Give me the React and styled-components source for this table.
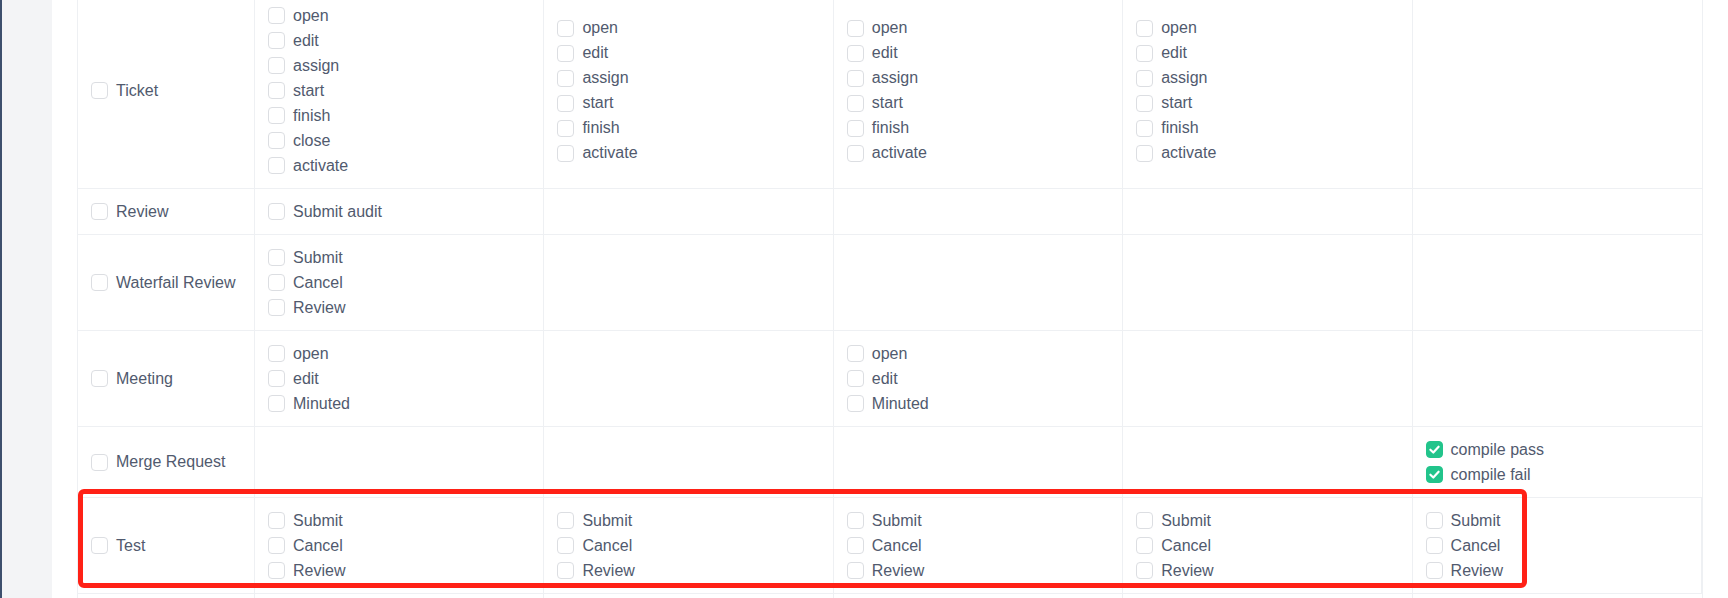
import React from 'react'
import styled, { createGlobalStyle } from 'styled-components'

const GlobalStyle = createGlobalStyle`
    html, body {
        margin: 0;
        padding: 0;
        background: #ffffff;
    }
    body {
        font-family: "Liberation Sans", Arial, sans-serif;
    }
`;

const Page = styled.div`
    display: flex;
    height: 598px;
    overflow: hidden;
`;

const Rail = styled.div`
    width: 2px;
    flex-shrink: 0;
    background-color: #3d4f6d;
`;

const Gutter = styled.div`
    width: 50px;
    flex-shrink: 0;
    background-color: #f3f4f6;
`;

const Main = styled.div`
    flex: 1;
    padding-left: 25px;
    background-color: #ffffff;
`;

const Table = styled.div`
    width: 1626px;
    margin-top: -7px;
    border-left: 1px solid #eef0f3;
    border-right: 1px solid #eef0f3;
    box-sizing: border-box;
`;

const Row = styled.div`
    position: relative;
    display: grid;
    grid-template-columns: 177px repeat(5, 1fr);
    border-bottom: 1px solid #eef0f3;
    min-height: ${props => props.$minHeight || 0}px;
`;

const Cell = styled.div`
    display: flex;
    flex-direction: column;
    justify-content: center;
    padding: 10px 13px;
    border-right: 1px solid #eef0f3;
    box-sizing: border-box;

    &:last-child {
        border-right: none;
    }
`;

const Item = styled.label`
    display: flex;
    align-items: center;
    height: 25px;
    font-size: 16px;
    color: #515a6e;
    white-space: nowrap;
`;

const Box = styled.span`
    display: inline-flex;
    align-items: center;
    justify-content: center;
    width: 17px;
    height: 17px;
    margin-right: 8px;
    border: 1px solid ${props => props.$checked ? '#22c48b' : '#dcdee2'};
    border-radius: 4px;
    background-color: ${props => props.$checked ? '#22c48b' : '#ffffff'};
    box-sizing: border-box;
    flex-shrink: 0;
`;

const Highlight = styled.div`
    position: absolute;
    left: 0;
    top: -9px;
    width: 1449px;
    height: 99px;
    border: 5px solid #ff2116;
    border-radius: 6px;
    box-sizing: border-box;
    pointer-events: none;
`;

const Check = ({ checked, label }) => (
    <Item>
        <Box $checked={checked}>
            {checked && (
                <svg width="13" height="13" viewBox="0 0 12 12">
                    <path d="M2.2 6.2 L4.9 8.8 L9.8 3.4" fill="none" stroke="#ffffff" strokeWidth="2" strokeLinecap="round" strokeLinejoin="round" />
                </svg>
            )}
        </Box>
        {label}
    </Item>
);

const ticketFull = ['open', 'edit', 'assign', 'start', 'finish', 'close', 'activate'];
const ticketShort = ['open', 'edit', 'assign', 'start', 'finish', 'activate'];
const flow = ['Submit', 'Cancel', 'Review'];
const meeting = ['open', 'edit', 'Minuted'];

const rows = [
    { name: 'Ticket', cols: [ticketFull, ticketShort, ticketShort, ticketShort, []] },
    { name: 'Review', cols: [['Submit audit'], [], [], [], []] },
    { name: 'Waterfail Review', cols: [flow, [], [], [], []] },
    { name: 'Meeting', cols: [meeting, [], meeting, [], []] },
    { name: 'Merge Request', cols: [[], [], [], [], ['compile pass', 'compile fail']], checked: true },
    { name: 'Test', cols: [flow, flow, flow, flow, flow], highlight: true },
];

export default function App() {
    return (
        <>
            <GlobalStyle />
            <Page>
                <Rail />
                <Gutter />
                <Main>
                    <Table>
                        {rows.map(row => (
                            <Row key={row.name}>
                                <Cell>
                                    <Check label={row.name} />
                                </Cell>
                                {row.cols.map((items, i) => (
                                    <Cell key={i}>
                                        {items.map(label => (
                                            <Check key={label} label={label} checked={row.checked} />
                                        ))}
                                    </Cell>
                                ))}
                                {row.highlight && <Highlight />}
                            </Row>
                        ))}
                        <Row $minHeight={46}>
                            <Cell /><Cell /><Cell /><Cell /><Cell /><Cell />
                        </Row>
                    </Table>
                </Main>
            </Page>
        </>
    )
}
